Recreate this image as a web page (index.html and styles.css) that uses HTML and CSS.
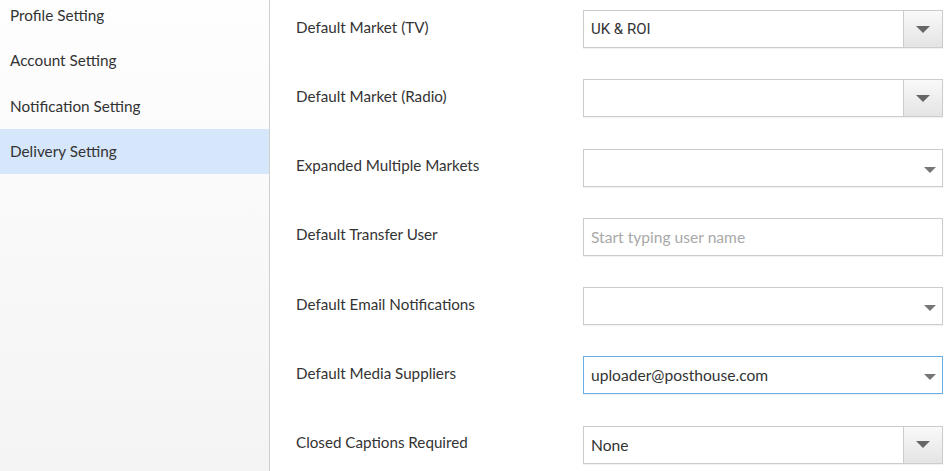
FILE: index.html
```html
<!DOCTYPE html>
<html lang="en">
<head>
  <meta charset="UTF-8" />
  <meta name="viewport" content="width=device-width, initial-scale=1.0"/>
  <title>Delivery Setting</title>
  <link rel="stylesheet" href="styles.css">
</head>
<body>

  <div class="page">
    <aside class="sidebar">
      <ul class="menu">
        <li class="menu-item">Profile Setting</li>
        <li class="menu-item">Account Setting</li>
        <li class="menu-item">Notification Setting</li>
        <li class="menu-item active">Delivery Setting</li>
      </ul>
    </aside>

    <main class="content">
      <div class="row">
        <label class="label">Default Market (TV)</label>
        <div class="field select">
          <span class="value roboto">UK &amp; ROI</span>
          <span class="btn"><span class="caret"></span></span>
        </div>
      </div>

      <div class="row">
        <label class="label">Default Market (Radio)</label>
        <div class="field select">
          <span class="value"></span>
          <span class="btn"><span class="caret"></span></span>
        </div>
      </div>

      <div class="row">
        <label class="label">Expanded Multiple Markets</label>
        <div class="field multi">
          <span class="value"></span>
          <span class="caret small"></span>
        </div>
      </div>

      <div class="row">
        <label class="label">Default Transfer User</label>
        <div class="field">
          <span class="value placeholder">Start typing user name</span>
        </div>
      </div>

      <div class="row">
        <label class="label">Default Email Notifications</label>
        <div class="field multi">
          <span class="value"></span>
          <span class="caret small"></span>
        </div>
      </div>

      <div class="row">
        <label class="label">Default Media Suppliers</label>
        <div class="field multi focused">
          <span class="value">uploader@posthouse.com</span>
          <span class="caret small"></span>
        </div>
      </div>

      <div class="row">
        <label class="label">Closed Captions Required</label>
        <div class="field select">
          <span class="value">None</span>
          <span class="btn"><span class="caret"></span></span>
        </div>
      </div>
    </main>
  </div>

</body>
</html>
```

FILE: styles.css
```css
* {
  margin: 0;
  padding: 0;
  box-sizing: border-box;
}

body, html {
  height: 100%;
  overflow: hidden;
  background-color: #fff;
  font-family: 'Lato', 'Open Sans', sans-serif;
  color: #333;
}

.page {
  display: flex;
  height: 100%;
}

/* sidebar */

.sidebar {
  width: 270px;
  flex-shrink: 0;
  border-right: 1px solid #cfcfcf;
  background: linear-gradient(#fefefe, #f4f4f4);
}

.menu {
  list-style: none;
  margin-top: -8px;
}

.menu-item {
  height: 45.5px;
  display: flex;
  align-items: center;
  padding-left: 10px;
  font-size: 15.3px;
  color: #333;
}

.menu-item.active {
  background-color: #d6e6fb;
}

/* form */

.content {
  flex: 1;
  padding: 10px 8px 0 26px;
  display: flex;
  flex-direction: column;
  gap: 31.3px;
}

.row {
  display: flex;
  align-items: center;
}

.label {
  width: 287px;
  font-size: 15.2px;
  color: #333;
  margin-top: -5px;
}

.field {
  width: 360px;
  height: 38px;
  border: 1px solid #ccc;
  background: #fff;
  display: flex;
  align-items: center;
  box-shadow: 0 1px 1px rgba(0, 0, 0, 0.05);
}

.field.focused {
  border-color: #66afe9;
}

.value {
  flex: 1;
  padding-left: 7px;
  font-size: 15.6px;
  color: #333;
  white-space: nowrap;
}

.value.roboto {
  font-family: 'Roboto', sans-serif;
  font-size: 15px;
}

.placeholder {
  color: #a9a9a9;
}

.btn {
  width: 39px;
  height: 100%;
  border-left: 1px solid #ccc;
  background: linear-gradient(#f9f9f9, #e4e4e4);
  display: flex;
  align-items: center;
  justify-content: center;
}

.caret {
  width: 0;
  height: 0;
  border-left: 7px solid transparent;
  border-right: 7px solid transparent;
  border-top: 7px solid #666;
}

.caret.small {
  margin-right: 6px;
  margin-top: 4px;
  border-left-width: 6px;
  border-right-width: 6px;
  border-top-width: 6px;
  border-top-color: #777;
}
```
